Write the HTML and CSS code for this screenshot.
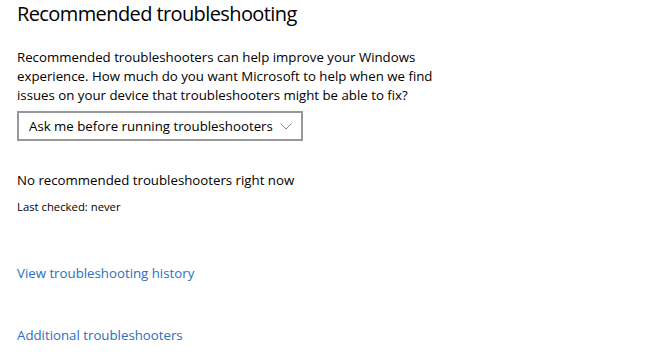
FILE: index.html
```html
<!DOCTYPE html>
<html>
<head>
<meta charset="utf-8">
<link rel="stylesheet" href="styles.css">
</head>
<body>
<main class="page">
  <h1 class="title">Recommended troubleshooting</h1>
  <p class="desc">Recommended troubleshooters can help improve your Windows experience. How much do you want Microsoft to help when we find issues on your device that troubleshooters might be able to fix?</p>
  <div class="select">
    <span class="select-text">Ask me before running troubleshooters</span>
    <svg class="chev" width="12" height="7" viewBox="0 0 12 7"><path d="M0.5 0.5 L6 6 L11.5 0.5" fill="none" stroke="#888" stroke-width="1"/></svg>
  </div>
  <p class="status">No recommended troubleshooters right now</p>
  <p class="small">Last checked: never</p>
  <a class="link link-history" href="#">View troubleshooting history</a>
  <a class="link link-additional" href="#">Additional troubleshooters</a>
</main>
</body>
</html>
```

FILE: styles.css
```css
html, body {
  margin: 0;
  padding: 0;
  background: #fff;
}
.page {
  display: flex;
  flex-direction: column;
  align-items: flex-start;
  padding: 0 0 0 17px;
  font-family: "Open Sans", "Noto Sans", sans-serif;
  color: #000;
}
.title {
  margin: 0;
  font-size: 20px;
  font-weight: 400;
  line-height: 28px;
  letter-spacing: -0.6px;
}
.desc {
  margin: 20px 0 0;
  width: 430px;
  font-size: 13.25px;
  line-height: 19px;
}
.select {
  margin-top: 6px;
  box-sizing: border-box;
  width: 286px;
  height: 30px;
  border: 2px solid #999;
  display: flex;
  align-items: center;
  justify-content: space-between;
  padding: 0 9px 0 10px;
  font-size: 13.25px;
}
.chev { display: block; }
.status {
  margin: 30px 0 0;
  font-size: 13.25px;
  line-height: 19px;
}
.small {
  margin: 9px 0 0;
  font-size: 11.3px;
  line-height: 16px;
}
.link {
  color: #2a6fc0;
  text-decoration: none;
  font-size: 13.25px;
  line-height: 19px;
}
.link-history { margin-top: 49px; }
.link-additional { margin-top: 43px; }
```
